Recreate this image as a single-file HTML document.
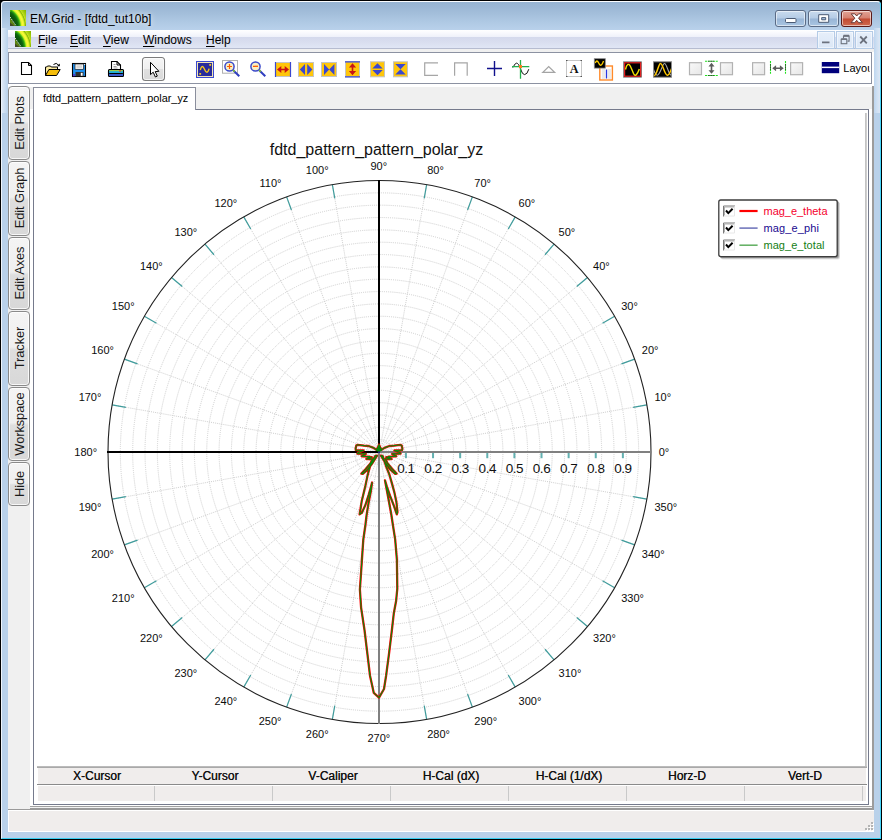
<!DOCTYPE html>
<html><head><meta charset="utf-8"><title>EM.Grid - [fdtd_tut10b]</title>
<style>
*{box-sizing:border-box;margin:0;padding:0}
html,body{width:882px;height:840px;overflow:hidden;background:#000}
body{position:relative;font-family:"Liberation Sans",sans-serif;font-size:12px;color:#000}
.abs{position:absolute}
#win{position:absolute;left:0;top:0;width:882px;height:840px;background:#000;border-radius:5px 5px 0 0;overflow:hidden}
#frame{position:absolute;left:1px;top:1px;width:880px;height:838px;border-radius:4px 4px 0 0;
 background:linear-gradient(to bottom,#96b3d2 0px,#9bb7d5 6px,#a4bfdb 13px,#afc9e4 21px,#b9d1eb 29px,#b9d1ea 60px,#b9d1ea 100%);}
#frame:before{content:"";position:absolute;left:0;top:0;right:0;bottom:0;border-radius:4px 4px 0 0;border-top:1px solid #fbfdff;border-left:1px solid #eef4fb;border-right:1px solid #45d6fb;border-bottom:1px solid #38cdf0}
#rgrad{position:absolute;left:874px;top:28px;width:6px;height:85px;background:linear-gradient(to right,#bed6ef,#cfe0f2 50%,#dde6f4)}
#lgrad{position:absolute;left:2px;top:28px;width:6px;height:85px;background:linear-gradient(to right,#dde8f5,#c6daef 60%,#b9d1ea)}
#title{position:absolute;left:30px;top:11.6px;font-size:12px;line-height:14px;white-space:nowrap;color:#000;text-shadow:0 0 5px rgba(255,255,255,.75),0 0 9px rgba(255,255,255,.5)}
.cap{position:absolute;top:10px;height:17px;border:1px solid #5a6b86;border-radius:3px;
 background:linear-gradient(to bottom,#c9dbee 0%,#b4cbe5 48%,#98b5d6 52%,#a9c5e2 100%);box-shadow:inset 0 0 0 1px rgba(255,255,255,.55)}
.cap.close{border-color:#5a1a18;background:linear-gradient(to bottom,#e2a497 0%,#d5806f 48%,#c24a32 52%,#cf6a50 100%)}
#menubar{position:absolute;left:8px;top:30px;width:866px;height:19px;background:linear-gradient(to bottom,#ffffff 0px,#f8f9fd 3px,#eef1fa 7px,#d4d9ec 7px,#d9deef 12px,#e0e6f5 18px,#b6bcd0 18px,#b6bcd0 19px)}
#menubar .mi{position:absolute;top:3px;font-size:12px;line-height:14px;white-space:nowrap}
#menubar .mi u{text-decoration:underline;text-underline-offset:1.5px}
.mdi{position:absolute;top:1px;width:18px;height:18px;border:1px solid #b4cbe6;background:linear-gradient(to bottom,#e6effa,#dbe7f6);box-shadow:inset 0 0 0 1px rgba(255,255,255,.5)}
#client{position:absolute;left:8px;top:49px;width:866px;height:783px;background:#fff}
#mgap{position:absolute;left:8px;top:49px;width:866px;height:3px;background:#f0f0f0}
#toolbar{position:absolute;left:8px;top:52px;width:864px;height:32px;background:#fff;border:1px solid #8c92a2}
#gray{position:absolute;left:8px;top:87px;width:864px;height:722px;background:#f0f0f0}
#rgray{position:absolute;left:872px;top:86px;width:2px;height:724px;background:#9c9c9c}
#bgray{position:absolute;left:30px;top:805px;width:842px;height:5px;background:linear-gradient(to bottom,#fff 0,#fff 1px,#a2a2a2 1px,#a2a2a2 2px,#f2f2f2 2px,#f2f2f2 3px,#9a9a9a 3px)}
#sbline{position:absolute;left:8px;top:809px;width:22px;height:1px;background:#9a9a9a}
#wcol{position:absolute;left:30px;top:109px;width:842px;height:697px;background:#fff}
.vtab{position:absolute;left:8px;width:22px;border:1px solid #8a8a8a;border-radius:4px;
 background:linear-gradient(to bottom,#f4f4f4 0%,#efefef 48%,#dedede 52%,#d8d8d8 100%);box-shadow:inset 0 0 0 1px rgba(255,255,255,.8)}
.vtab span{position:absolute;left:calc(50% + 0.8px);top:calc(50% - 0.5px);white-space:nowrap;letter-spacing:-0.1px;font-size:12.9px;line-height:14px;transform:translate(-50%,-50%) rotate(-90deg);color:#1a1a1a}
#view{position:absolute;left:33px;top:109px;width:836px;height:696px;background:#fff;border:1px solid #757a8c;}
#tab{position:absolute;left:33px;top:87px;width:163px;height:23px;background:#fff;border:1px solid #8a8e9c;border-bottom:none;font-size:11px;}
#tab span{position:absolute;left:9px;top:4px;white-space:nowrap;font-size:10.9px;line-height:13px}
#status{position:absolute;left:8px;top:810px;width:866px;height:22px;background:#f0edec;border:1px solid #fff;border-right:none}
svg text{font-family:"Liberation Sans",sans-serif}
.g{fill:none;stroke:#cecece;stroke-width:1;stroke-dasharray:1 1.1}
.t{stroke:#3f9c9c;stroke-width:1.2}
.dl{font-size:11px;fill:#0c0c0c}
.al{font-size:13.5px;fill:#111;letter-spacing:-0.45px}
.hdr{position:absolute;top:0;height:16px;font-size:12px;font-weight:normal;text-shadow:0.25px 0 0 #333;text-align:center;line-height:16px;color:#111}
.vs{position:absolute;top:676px;width:1px;height:15px;background:#c9c9c9}
.grip{position:absolute;width:2px;height:2px;background:#b4b4b4;box-shadow:1px 1px 0 #fff}

</style></head><body>
<div id="win">
<div id="frame"></div>
<div id="rgrad"></div><div id="lgrad"></div>
<svg class="abs" style="left:10px;top:10px" width="16" height="16" viewBox="0 0 16 16"><radialGradient id="lg1" gradientUnits="userSpaceOnUse" cx="-9.8" cy="16.9" r="36"><stop offset="0.000" stop-color="#052c05"/><stop offset="0.389" stop-color="#0a4a0a"/><stop offset="0.494" stop-color="#0f6410"/><stop offset="0.539" stop-color="#2a9a10"/><stop offset="0.564" stop-color="#62d018"/><stop offset="0.589" stop-color="#d8ee28"/><stop offset="0.628" stop-color="#fbfb3a"/><stop offset="0.661" stop-color="#e6f230"/><stop offset="0.683" stop-color="#b4d816"/><stop offset="0.703" stop-color="#86b408"/><stop offset="0.722" stop-color="#c0e020"/><stop offset="0.764" stop-color="#a8d010"/><stop offset="0.833" stop-color="#86ba00"/><stop offset="1.000" stop-color="#6aa000"/></radialGradient><rect width="16" height="16" fill="url(#lg1)"/><path d="M0,7.6 L5.6,16 H0z" fill="#5f8612"/><path d="M0,16 h4.4 l-4.4,-3.4z" fill="#3e3e2c" opacity=".85"/><path d="M0,7 L6.2,16" stroke="#fff" stroke-width="1" stroke-dasharray="1.2 1" fill="none"/><path d="M0,0 h2.2 q-1.6,1 -2.2,2.6z" fill="#4aa812"/></svg>
<svg class="abs" style="left:15px;top:31px;z-index:6" width="16" height="16" viewBox="0 0 16 16"><radialGradient id="lg2" gradientUnits="userSpaceOnUse" cx="-9.8" cy="16.9" r="36"><stop offset="0.000" stop-color="#052c05"/><stop offset="0.389" stop-color="#0a4a0a"/><stop offset="0.494" stop-color="#0f6410"/><stop offset="0.539" stop-color="#2a9a10"/><stop offset="0.564" stop-color="#62d018"/><stop offset="0.589" stop-color="#d8ee28"/><stop offset="0.628" stop-color="#fbfb3a"/><stop offset="0.661" stop-color="#e6f230"/><stop offset="0.683" stop-color="#b4d816"/><stop offset="0.703" stop-color="#86b408"/><stop offset="0.722" stop-color="#c0e020"/><stop offset="0.764" stop-color="#a8d010"/><stop offset="0.833" stop-color="#86ba00"/><stop offset="1.000" stop-color="#6aa000"/></radialGradient><rect width="16" height="16" fill="url(#lg2)"/><path d="M0,7.6 L5.6,16 H0z" fill="#5f8612"/><path d="M0,16 h4.4 l-4.4,-3.4z" fill="#3e3e2c" opacity=".85"/><path d="M0,7 L6.2,16" stroke="#fff" stroke-width="1" stroke-dasharray="1.2 1" fill="none"/><path d="M0,0 h2.2 q-1.6,1 -2.2,2.6z" fill="#4aa812"/></svg>
<div id="title">EM.Grid - [fdtd_tut10b]</div>
<div class="cap" style="left:775px;width:31px"></div>
<div class="cap" style="left:808px;width:31px"></div>
<div class="cap close" style="left:841px;width:31px"></div>
<svg class="abs" style="left:770px;top:4px;z-index:5" width="112" height="50" viewBox="770 4 112 50">
<rect x="785.5" y="18.5" width="10.5" height="4" rx="1" fill="#fff" stroke="#4a5a74" stroke-width="1"/>
<path d="M818.7,14.7 h10 v7.6 h-10z M821.7,17.6 h4 v2.2 h-4z" fill="#fff" fill-rule="evenodd" stroke="#4a5a74" stroke-width="1" stroke-linejoin="round"/>
<path d="M851.2,13.8 L854.8,13.8 L856.7,16 L858.6,13.8 L862.2,13.8 L858.6,18.2 L862.4,22.7 L858.7,22.7 L856.7,20.3 L854.7,22.7 L851,22.7 L854.8,18.2Z" fill="#fff" stroke="#6a3a36" stroke-width="1" stroke-linejoin="round"/>
<g fill="none" stroke="#6c727e" stroke-width="1.6">
<path d="M822,42.4 h7.5"/>
<path d="M860.2,36.5 l6.6,6.8 M866.8,36.5 l-6.6,6.8" stroke-width="1.8"/>
</g>
<g fill="none" stroke="#6c727e" stroke-width="1.1">
<path d="M843.5,38.5 v-2.4 h5.6 v5 h-1.6" />
<path d="M843.5,35.6 h5.6" stroke-width="1.6"/>
<rect x="841.2" y="39.3" width="5.6" height="4.4"/>
<path d="M841.2,39 h5.6" stroke-width="1.6"/>
</g>
</svg>
<div id="menubar">
 <div class="mi" style="left:30px"><u>F</u>ile</div>
 <div class="mi" style="left:62px"><u>E</u>dit</div>
 <div class="mi" style="left:95px"><u>V</u>iew</div>
 <div class="mi" style="left:135px"><u>W</u>indows</div>
 <div class="mi" style="left:198px"><u>H</u>elp</div>
 <div class="mdi" style="left:809px"></div>
 <div class="mdi" style="left:828px"></div>
 <div class="mdi" style="left:847px"></div>
</div>
<div id="client"></div><div id="mgap"></div>
<div id="gray"></div><div id="wcol"></div><div id="rgray"></div><div id="bgray"></div><div id="sbline"></div>
<div id="toolbar"></div>
<svg class="abs" style="left:0;top:50px;z-index:4" width="882" height="36" viewBox="0 50 882 36">
<!-- new -->
<path d="M21.5,62.5 h7 l3,3 v9 h-10z" fill="#fff" stroke="#000" stroke-width="1.1"/>
<path d="M28.5,62.5 v3 h3" fill="none" stroke="#000" stroke-width="1"/>
<!-- open -->
<path d="M45.5,75.5 v-8.5 h1.2 l0.8,-1 h3 l0.8,1 h6.2 v2" fill="#fbeaa0" stroke="#000" stroke-width="1"/>
<path d="M45.5,75.5 l3.4,-6 h11.3 l-3.6,6z" fill="#f5bd0a" stroke="#000" stroke-width="1" stroke-linejoin="round"/>
<path d="M53.5,64.5 q2.8,-2.6 5.3,0.8" fill="none" stroke="#000" stroke-width="1"/>
<path d="M59.8,63.5 v2.8 h-2.8z" fill="#000"/>
<!-- save -->
<rect x="72.5" y="63.5" width="13" height="13" fill="#1e8fee" stroke="#000" stroke-width="1.1"/>
<rect x="75" y="64" width="8.5" height="5.3" fill="#f4f4f4" stroke="#222" stroke-width=".7"/>
<rect x="76.5" y="65.3" width="5.5" height="2.6" fill="#d6d6d6"/>
<rect x="75.5" y="72" width="8" height="4.3" fill="#303030"/>
<rect x="80.8" y="72.8" width="1.8" height="3" fill="#fff"/>
<rect x="73" y="74" width="2" height="2.2" fill="#4a3ad0"/>
<rect x="84.2" y="64" width="1" height="1" fill="#fff"/>
<!-- print -->
<path d="M111.5,69.5 v-8 h5.5 l3.5,3.5 v4.5z" fill="#fff" stroke="#000" stroke-width="1.1"/>
<path d="M117,61.5 v3.5 h3.5" fill="none" stroke="#000" stroke-width="1"/>
<path d="M113.5,64.5 h2 M113.5,66.5 h3 M113.5,68 h4" stroke="#888" stroke-width=".8"/>
<rect x="108.5" y="69.5" width="15" height="7" rx="1" fill="#2d7be0" stroke="#000" stroke-width="1.1"/>
<rect x="109.2" y="70.2" width="13.6" height="1.2" fill="#b8e028"/>
<rect x="109.2" y="71.3" width="13.6" height="1.5" fill="#18b8d8"/>
<rect x="109.2" y="73" width="13.6" height="1" fill="#000"/>
<rect x="109.2" y="74" width="13.6" height="2" fill="#3a58c8"/>
<rect x="119" y="70.4" width="2" height="1.2" fill="#e83030"/>
<!-- pointer button -->
<linearGradient id="pb" x1="0" y1="0" x2="0" y2="1"><stop offset="0" stop-color="#f6f6f6"/><stop offset=".48" stop-color="#efefef"/><stop offset=".52" stop-color="#e0e0e0"/><stop offset="1" stop-color="#d9d9d9"/></linearGradient>
<rect x="142.5" y="57.5" width="22" height="23" rx="3" fill="url(#pb)" stroke="#7c7c7c" stroke-width="1.1"/>
<rect x="143.5" y="58.5" width="20" height="21" rx="2" fill="none" stroke="#fff" stroke-opacity=".7" stroke-width="1"/>
<path d="M150.5,62.3 V74.6 L153.2,72.2 L155.4,77 L157.3,76.1 L155.2,71.6 L158.9,71.3Z" fill="#fff" stroke="#000" stroke-width="1" stroke-linejoin="miter"/>
</svg>
<svg class="abs" style="left:0;top:50px;z-index:4" width="882" height="36" viewBox="0 50 882 36">
<!-- graph -->
<rect x="196.5" y="61.5" width="17" height="16" fill="#282c9c" stroke="#3b4bd2" stroke-width="1"/>
<rect x="197.5" y="62.5" width="15" height="14" fill="none" stroke="#f3e6b4" stroke-width="1"/>
<path d="M200.3,70 q1.6,-6.5 4.2,-0.8 q2.6,6.4 4.6,-0.6" fill="none" stroke="#f6c81a" stroke-width="1.4"/>
<rect x="209.3" y="64" width="1.8" height="1.8" fill="#f6c81a"/><rect x="199.3" y="73" width="1.8" height="1.8" fill="#f6c81a"/>
<!-- zoom in -->
<rect x="222.5" y="60.5" width="15" height="12.7" fill="#fff" stroke="#b0b0b0" stroke-width="1"/>
<path d="M233.2,70.2 L239.3,76.3" stroke="#2f3ec0" stroke-width="2"/>
<path d="M232.6,69.6 L234.6,71.6" stroke="#86c828" stroke-width="1.6"/>
<circle cx="229.5" cy="66.5" r="4.6" fill="#f9f0c4" stroke="#3b4acb" stroke-width="1.5"/>
<path d="M227,66.5 h5 M229.5,64 v5" stroke="#ff5a00" stroke-width="1.2"/>
<!-- zoom out -->
<path d="M259.2,70.2 L265.3,76.3" stroke="#2f3ec0" stroke-width="2"/>
<path d="M258.6,69.6 L260.6,71.6" stroke="#86c828" stroke-width="1.6"/>
<circle cx="255.5" cy="66.5" r="4.6" fill="#f9f0c4" stroke="#3b4acb" stroke-width="1.5"/>
<path d="M253,66.3 h5" stroke="#ff5a00" stroke-width="1.3"/>
<!-- h expand -->
<rect x="275.5" y="62.5" width="15" height="14" fill="#ffc60a" stroke="#c4c4c4" stroke-width="1"/>
<path d="M275.5,62 v15 M290.5,62 v15" stroke="#3a48d0" stroke-width="1.2"/>
<path d="M277,69.5 l4.3,-3.6 v2.8 h3.4 v-2.8 l4.3,3.6 l-4.3,3.6 v-2.8 h-3.4 v2.8z" fill="#c81414"/>
<!-- h tri out -->
<rect x="298.5" y="62.5" width="15" height="14" fill="#ffc60a" stroke="#c4c4c4" stroke-width="1"/>
<path d="M299.8,69.5 l5.2,-5.4 v10.8z M312.4,69.5 l-5.2,-5.4 v10.8z" fill="#3a48d0"/>
<!-- bowtie -->
<rect x="321.5" y="62.5" width="15" height="14" fill="#ffc60a" stroke="#c4c4c4" stroke-width="1"/>
<path d="M324,64 l5.2,5.5 l5.2,-5.5 v11 l-5.2,-5.5 l-5.2,5.5z" fill="#3a48d0"/>
<!-- v expand -->
<rect x="345.5" y="61.8" width="14" height="15" fill="#ffc60a" stroke="#c4c4c4" stroke-width="1"/>
<path d="M345,61.8 h15 M345,76.8 h15" stroke="#3a48d0" stroke-width="1.2"/>
<path d="M352.5,63.3 l3.6,4.3 h-2.8 v3.4 h2.8 l-3.6,4.3 l-3.6,-4.3 h2.8 v-3.4 h-2.8z" fill="#c81414"/>
<!-- v tri out -->
<rect x="370.5" y="61.8" width="14" height="15" fill="#ffc60a" stroke="#c4c4c4" stroke-width="1"/>
<path d="M377.5,63.3 l5.2,5.2 h-10.4z M377.5,75.3 l5.2,-5.2 h-10.4z" fill="#3a48d0"/>
<!-- hourglass -->
<rect x="393.5" y="61.8" width="14" height="15" fill="#ffc60a" stroke="#c4c4c4" stroke-width="1"/>
<path d="M395.3,64 h10.4 l-5.2,5.3 l5.2,5.3 h-10.4 l5.2,-5.3z" fill="#3a48d0"/>
<!-- brackets -->
<path d="M438,62.8 h-13.3 v12.5 h13.3" fill="none" stroke="#a6a6a6" stroke-width="1.2"/>
<path d="M454.6,75.8 v-13 h12.6 v13" fill="none" stroke="#a6a6a6" stroke-width="1.2"/>
</svg>
<svg class="abs" style="left:0;top:50px;z-index:4" width="882" height="36" viewBox="0 50 882 36">
<!-- plus -->
<path d="M487,68.5 h15 M494.5,61 v15" stroke="#10108c" stroke-width="1.4" fill="none"/>
<!-- tracker -->
<path d="M512.8,67.6 q0.8,-1.2 1.6,-2.6 q2,-3.4 4,-0.6 q1.6,2.2 2.6,5.6 q1.2,4.4 3.6,4.6 q2.6,0 4.2,-5.4" fill="none" stroke="#111" stroke-width="1"/>
<path d="M512,66.6 h17.3 M520.5,60 v18.8" stroke="#22b14c" stroke-width="1.3" fill="none"/>
<rect x="519" y="65.1" width="3" height="3" fill="#ff7a1a"/>
<!-- triangle -->
<path d="M542.8,72.4 L548.7,66.6 L554.6,72.4Z" fill="none" stroke="#a4a4a4" stroke-width="1.3"/>
<!-- A -->
<rect x="566.5" y="60.5" width="15" height="16" fill="#fff" stroke="#c6c6c6" stroke-width="1"/>
<path d="M566,60.5 h1.5 M580.5,60.5 h1.5 M566,76.5 h1.5 M580.5,76.5 h1.5" stroke="#555" stroke-width="1"/>
<text x="574.1" y="72.8" text-anchor="middle" style="font-family:'Liberation Serif',serif;font-weight:bold;font-size:12.2px" fill="#111">A</text>
<!-- copy -->
<rect x="599.8" y="66" width="12.6" height="14" fill="#fff" stroke="#ff8a2a" stroke-width="1.4"/>
<path d="M601.8,70 h3.4 M601.8,72 h3.4 M601.8,74 h3.4 M601.8,76 h3.4 M601.8,78 h3.4 M607.8,70 h3.2 M607.8,72 h3.2 M607.8,74 h3.2 M607.8,76 h3.2 M607.8,78 h3.2" stroke="#c4c4c4" stroke-width=".7"/>
<path d="M606.5,69.5 v9" stroke="#2838e0" stroke-width="1.3"/>
<rect x="594.3" y="58.7" width="11" height="9.4" fill="#000" stroke="#8a8a8a" stroke-width=".8"/>
<path d="M595.3,63 q1.5,-4 3.4,0 q1.6,3.6 3.2,1.4 q0.8,-1 1.6,-3.4" fill="none" stroke="#ffd000" stroke-width="1.3"/>
<!-- black red -->
<rect x="623.6" y="61.8" width="18" height="15.4" fill="#000" stroke="#8a8a8a" stroke-width=".8"/>
<rect x="624.6" y="62.8" width="16" height="13.4" fill="none" stroke="#e42020" stroke-width="1.2"/>
<path d="M625.5,69.5 q2,-8.5 5,-3 q1.6,3.4 3,7 q2.4,5 5.8,-4.5" fill="none" stroke="#f2e000" stroke-width="1.4"/>
<!-- black gray -->
<rect x="653.5" y="61.8" width="18" height="15.4" fill="#000" stroke="#8a8a8a" stroke-width="1"/>
<clipPath id="bg2"><rect x="654" y="62.3" width="17" height="14.4"/></clipPath>
<g clip-path="url(#bg2)"><path d="M650.2,63.6 C652.6,63.6 654.2,75.5 657.2,75.3 C660.2,75 662.5,63.5 664.5,63.5 C667,63.5 668.5,75.5 671.5,75.3" fill="none" stroke="#a8a8a8" stroke-width="1.1"/>
<path d="M654.2,75.8 C657,75 658.5,63.5 660.5,63.5 C663,63.5 664.5,75.5 667.5,75.3 C669.5,75 670.5,71 671.6,68.6" fill="none" stroke="#ffc800" stroke-width="1.5"/></g>
<!-- checkboxes -->
<linearGradient id="cbx" x1="0" y1="0" x2="1" y2="1"><stop offset="0" stop-color="#f9f9f9"/><stop offset="1" stop-color="#e6e6e6"/></linearGradient>
<rect x="689.5" y="62.7" width="12" height="12" fill="url(#cbx)" stroke="#b2b2b2" stroke-width="1.2"/>
<rect x="720.5" y="62.7" width="12" height="12" fill="url(#cbx)" stroke="#b2b2b2" stroke-width="1.2"/>
<rect x="752.6" y="62.7" width="12" height="12" fill="url(#cbx)" stroke="#b2b2b2" stroke-width="1.2"/>
<rect x="790.6" y="62.7" width="12" height="12" fill="url(#cbx)" stroke="#b2b2b2" stroke-width="1.2"/>
<!-- v arrow -->
<path d="M705,61.3 h13 M705,75.5 h13" stroke="#22e020" stroke-width="1.1" stroke-dasharray="2 0.7"/>
<path d="M708.5,61.3 h6 M708.5,75.5 h6" stroke="#111" stroke-width="1.1" stroke-dasharray="1 1"/>
<path d="M711.5,62.8 l3,3.6 h-2.2 v3.8 h2.2 l-3,3.6 l-3,-3.6 h2.2 v-3.8 h-2.2z" fill="#5c5c5c"/>
<!-- h arrow -->
<path d="M770.5,61 v13 M785.5,61 v13" stroke="#22e020" stroke-width="1.1" stroke-dasharray="2 0.7"/>
<path d="M770.5,64.5 v6 M785.5,64.5 v6" stroke="#111" stroke-width="1.1" stroke-dasharray="1 1"/>
<path d="M772.3,68.3 l3.8,-3 v2.2 h3.8 v-2.2 l3.8,3 l-3.8,3 v-2.2 h-3.8 v2.2z" fill="#5c5c5c"/>
<!-- layout -->
<rect x="821.8" y="62" width="17.4" height="11.2" fill="#00007c"/>
<rect x="821.8" y="66.6" width="17.4" height="1.5" fill="#fff"/>
<clipPath id="lc"><rect x="840" y="54" width="29.6" height="28"/></clipPath>
<text x="843.3" y="72" font-size="11px" fill="#000" clip-path="url(#lc)">Layou</text>
</svg>

 <div class="vtab" style="top:86px;height:74px"><span>Edit Plots</span></div>
 <div class="vtab" style="top:161px;height:75px"><span>Edit Graph</span></div>
 <div class="vtab" style="top:237px;height:73px"><span>Edit Axes</span></div>
 <div class="vtab" style="top:311px;height:75px"><span>Tracker</span></div>
 <div class="vtab" style="top:387px;height:74px"><span>Workspace</span></div>
 <div class="vtab" style="top:462px;height:44px"><span>Hide</span></div>
 <div id="view">
  <div class="abs" style="left:831px;top:3px;width:2px;height:653px;background:linear-gradient(to right,#bdbdbd,#d6d6d6)"></div>
  <div class="abs" style="left:3px;top:656px;width:830px;height:2px;background:linear-gradient(to bottom,#c4c4c4,#a0a0a0)"></div>
  <div class="abs" style="left:4px;top:658px;width:828px;height:16px;background:#f0edec"></div>
  <div class="abs" style="left:3px;top:674px;width:830px;height:1px;background:#8a8a8a"></div>
  <div class="abs" style="left:4px;top:676px;width:828px;height:15px;background:#f0edec"></div>
  <div class="hdr" style="left:4px;top:658px;width:118px">X-Cursor</div>
  <div class="hdr" style="left:122px;top:658px;width:118px">Y-Cursor</div>
  <div class="hdr" style="left:240px;top:658px;width:118px">V-Caliper</div>
  <div class="hdr" style="left:358px;top:658px;width:118px">H-Cal (dX)</div>
  <div class="hdr" style="left:476px;top:658px;width:118px">H-Cal (1/dX)</div>
  <div class="hdr" style="left:594px;top:658px;width:118px">Horz-D</div>
  <div class="hdr" style="left:712px;top:658px;width:118px">Vert-D</div>
  <div class="vs" style="left:120px"></div><div class="vs" style="left:238px"></div><div class="vs" style="left:356px"></div>
  <div class="vs" style="left:474px"></div><div class="vs" style="left:592px"></div><div class="vs" style="left:710px"></div><div class="vs" style="left:828px"></div>
 </div>
 <div id="tab"><span>fdtd_pattern_pattern_polar_yz</span></div>
 <div id="status"></div><div class="grip" style="left:870.5px;top:822px"></div><div class="grip" style="left:867.5px;top:825px"></div><div class="grip" style="left:870.5px;top:825px"></div><div class="grip" style="left:864.5px;top:828px"></div><div class="grip" style="left:867.5px;top:828px"></div><div class="grip" style="left:870.5px;top:828px"></div>
<svg class="abs" style="left:0;top:0" width="882" height="840" viewBox="0 0 882 840">
<text x="376.5" y="155" text-anchor="middle" font-size="16" fill="#111">fdtd_pattern_pattern_polar_yz</text>
<circle cx="379.5" cy="452.0" r="12.34" class="g"/>
<circle cx="379.5" cy="452.0" r="24.68" class="g"/>
<circle cx="379.5" cy="452.0" r="37.02" class="g"/>
<circle cx="379.5" cy="452.0" r="49.36" class="g"/>
<circle cx="379.5" cy="452.0" r="61.70" class="g"/>
<circle cx="379.5" cy="452.0" r="74.05" class="g"/>
<circle cx="379.5" cy="452.0" r="86.39" class="g"/>
<circle cx="379.5" cy="452.0" r="98.73" class="g"/>
<circle cx="379.5" cy="452.0" r="111.07" class="g"/>
<circle cx="379.5" cy="452.0" r="123.41" class="g"/>
<circle cx="379.5" cy="452.0" r="135.75" class="g"/>
<circle cx="379.5" cy="452.0" r="148.09" class="g"/>
<circle cx="379.5" cy="452.0" r="160.43" class="g"/>
<circle cx="379.5" cy="452.0" r="172.77" class="g"/>
<circle cx="379.5" cy="452.0" r="185.11" class="g"/>
<circle cx="379.5" cy="452.0" r="197.45" class="g"/>
<circle cx="379.5" cy="452.0" r="209.80" class="g"/>
<circle cx="379.5" cy="452.0" r="222.14" class="g"/>
<circle cx="379.5" cy="452.0" r="234.48" class="g"/>
<circle cx="379.5" cy="452.0" r="246.82" class="g"/>
<circle cx="379.5" cy="452.0" r="259.16" class="g"/>
<line x1="379.5" y1="452.0" x2="646.88" y2="404.85" class="g"/>
<line x1="379.5" y1="452.0" x2="634.63" y2="359.14" class="g"/>
<line x1="379.5" y1="452.0" x2="614.63" y2="316.25" class="g"/>
<line x1="379.5" y1="452.0" x2="587.48" y2="277.48" class="g"/>
<line x1="379.5" y1="452.0" x2="554.02" y2="244.02" class="g"/>
<line x1="379.5" y1="452.0" x2="515.25" y2="216.87" class="g"/>
<line x1="379.5" y1="452.0" x2="472.36" y2="196.87" class="g"/>
<line x1="379.5" y1="452.0" x2="426.65" y2="184.62" class="g"/>
<line x1="379.5" y1="452.0" x2="332.35" y2="184.62" class="g"/>
<line x1="379.5" y1="452.0" x2="286.64" y2="196.87" class="g"/>
<line x1="379.5" y1="452.0" x2="243.75" y2="216.87" class="g"/>
<line x1="379.5" y1="452.0" x2="204.98" y2="244.02" class="g"/>
<line x1="379.5" y1="452.0" x2="171.52" y2="277.48" class="g"/>
<line x1="379.5" y1="452.0" x2="144.37" y2="316.25" class="g"/>
<line x1="379.5" y1="452.0" x2="124.37" y2="359.14" class="g"/>
<line x1="379.5" y1="452.0" x2="112.12" y2="404.85" class="g"/>
<line x1="379.5" y1="452.0" x2="112.12" y2="499.15" class="g"/>
<line x1="379.5" y1="452.0" x2="124.37" y2="544.86" class="g"/>
<line x1="379.5" y1="452.0" x2="144.37" y2="587.75" class="g"/>
<line x1="379.5" y1="452.0" x2="171.52" y2="626.52" class="g"/>
<line x1="379.5" y1="452.0" x2="204.98" y2="659.98" class="g"/>
<line x1="379.5" y1="452.0" x2="243.75" y2="687.13" class="g"/>
<line x1="379.5" y1="452.0" x2="286.64" y2="707.13" class="g"/>
<line x1="379.5" y1="452.0" x2="332.35" y2="719.38" class="g"/>
<line x1="379.5" y1="452.0" x2="426.65" y2="719.38" class="g"/>
<line x1="379.5" y1="452.0" x2="472.36" y2="707.13" class="g"/>
<line x1="379.5" y1="452.0" x2="515.25" y2="687.13" class="g"/>
<line x1="379.5" y1="452.0" x2="554.02" y2="659.98" class="g"/>
<line x1="379.5" y1="452.0" x2="587.48" y2="626.52" class="g"/>
<line x1="379.5" y1="452.0" x2="614.63" y2="587.75" class="g"/>
<line x1="379.5" y1="452.0" x2="634.63" y2="544.86" class="g"/>
<line x1="379.5" y1="452.0" x2="646.88" y2="499.15" class="g"/>
<line x1="646.88" y1="404.85" x2="633.09" y2="407.29" class="t"/>
<line x1="634.63" y1="359.14" x2="621.47" y2="363.93" class="t"/>
<line x1="614.63" y1="316.25" x2="602.50" y2="323.25" class="t"/>
<line x1="587.48" y1="277.48" x2="576.76" y2="286.48" class="t"/>
<line x1="554.02" y1="244.02" x2="545.02" y2="254.74" class="t"/>
<line x1="515.25" y1="216.87" x2="508.25" y2="229.00" class="t"/>
<line x1="472.36" y1="196.87" x2="467.57" y2="210.03" class="t"/>
<line x1="426.65" y1="184.62" x2="424.21" y2="198.41" class="t"/>
<line x1="332.35" y1="184.62" x2="334.79" y2="198.41" class="t"/>
<line x1="286.64" y1="196.87" x2="291.43" y2="210.03" class="t"/>
<line x1="243.75" y1="216.87" x2="250.75" y2="229.00" class="t"/>
<line x1="204.98" y1="244.02" x2="213.98" y2="254.74" class="t"/>
<line x1="171.52" y1="277.48" x2="182.24" y2="286.48" class="t"/>
<line x1="144.37" y1="316.25" x2="156.50" y2="323.25" class="t"/>
<line x1="124.37" y1="359.14" x2="137.53" y2="363.93" class="t"/>
<line x1="112.12" y1="404.85" x2="125.91" y2="407.29" class="t"/>
<line x1="112.12" y1="499.15" x2="125.91" y2="496.71" class="t"/>
<line x1="124.37" y1="544.86" x2="137.53" y2="540.07" class="t"/>
<line x1="144.37" y1="587.75" x2="156.50" y2="580.75" class="t"/>
<line x1="171.52" y1="626.52" x2="182.24" y2="617.52" class="t"/>
<line x1="204.98" y1="659.98" x2="213.98" y2="649.26" class="t"/>
<line x1="243.75" y1="687.13" x2="250.75" y2="675.00" class="t"/>
<line x1="286.64" y1="707.13" x2="291.43" y2="693.97" class="t"/>
<line x1="332.35" y1="719.38" x2="334.79" y2="705.59" class="t"/>
<line x1="426.65" y1="719.38" x2="424.21" y2="705.59" class="t"/>
<line x1="472.36" y1="707.13" x2="467.57" y2="693.97" class="t"/>
<line x1="515.25" y1="687.13" x2="508.25" y2="675.00" class="t"/>
<line x1="554.02" y1="659.98" x2="545.02" y2="649.26" class="t"/>
<line x1="587.48" y1="626.52" x2="576.76" y2="617.52" class="t"/>
<line x1="614.63" y1="587.75" x2="602.50" y2="580.75" class="t"/>
<line x1="634.63" y1="544.86" x2="621.47" y2="540.07" class="t"/>
<line x1="646.88" y1="499.15" x2="633.09" y2="496.71" class="t"/>
<circle cx="379.5" cy="452.0" r="271.5" fill="none" stroke="#222" stroke-width="1.1"/>
<line x1="379" y1="452" x2="379" y2="724" stroke="#808080" stroke-width="2"/>
<line x1="379" y1="452" x2="651" y2="452" stroke="#808080" stroke-width="2"/>
<line x1="379" y1="180" x2="379" y2="453" stroke="#000" stroke-width="2"/>
<line x1="107" y1="452" x2="379" y2="452" stroke="#000" stroke-width="2"/>
<line x1="405.92" y1="453" x2="405.92" y2="458.2" stroke="#62b0b0" stroke-width="2"/>
<text x="397.22" y="473.1" class="al">0.1</text>
<line x1="433.04" y1="453" x2="433.04" y2="458.2" stroke="#62b0b0" stroke-width="2"/>
<text x="424.34" y="473.1" class="al">0.2</text>
<line x1="460.16" y1="453" x2="460.16" y2="458.2" stroke="#62b0b0" stroke-width="2"/>
<text x="451.46" y="473.1" class="al">0.3</text>
<line x1="487.28" y1="453" x2="487.28" y2="458.2" stroke="#62b0b0" stroke-width="2"/>
<text x="478.58" y="473.1" class="al">0.4</text>
<line x1="514.40" y1="453" x2="514.40" y2="458.2" stroke="#62b0b0" stroke-width="2"/>
<text x="505.70" y="473.1" class="al">0.5</text>
<line x1="541.52" y1="453" x2="541.52" y2="458.2" stroke="#62b0b0" stroke-width="2"/>
<text x="532.82" y="473.1" class="al">0.6</text>
<line x1="568.64" y1="453" x2="568.64" y2="458.2" stroke="#62b0b0" stroke-width="2"/>
<text x="559.94" y="473.1" class="al">0.7</text>
<line x1="595.76" y1="453" x2="595.76" y2="458.2" stroke="#62b0b0" stroke-width="2"/>
<text x="587.06" y="473.1" class="al">0.8</text>
<line x1="622.88" y1="453" x2="622.88" y2="458.2" stroke="#62b0b0" stroke-width="2"/>
<text x="614.18" y="473.1" class="al">0.9</text>
<text x="658.7" y="456.1" text-anchor="start" class="dl">0°</text>
<text x="654.4" y="401.4" text-anchor="start" class="dl">10°</text>
<text x="641.8" y="354.3" text-anchor="start" class="dl">20°</text>
<text x="621.2" y="310.0" text-anchor="start" class="dl">30°</text>
<text x="593.1" y="270.0" text-anchor="start" class="dl">40°</text>
<text x="558.6" y="235.5" text-anchor="start" class="dl">50°</text>
<text x="518.6" y="207.4" text-anchor="start" class="dl">60°</text>
<text x="474.3" y="186.8" text-anchor="start" class="dl">70°</text>
<text x="427.2" y="174.2" text-anchor="start" class="dl">80°</text>
<text x="378.8" y="169.9" text-anchor="middle" class="dl">90°</text>
<text x="328.6" y="174.2" text-anchor="end" class="dl">100°</text>
<text x="281.5" y="186.8" text-anchor="end" class="dl">110°</text>
<text x="237.2" y="207.4" text-anchor="end" class="dl">120°</text>
<text x="197.2" y="235.5" text-anchor="end" class="dl">130°</text>
<text x="162.7" y="270.0" text-anchor="end" class="dl">140°</text>
<text x="134.6" y="310.0" text-anchor="end" class="dl">150°</text>
<text x="114.0" y="354.3" text-anchor="end" class="dl">160°</text>
<text x="101.4" y="401.4" text-anchor="end" class="dl">170°</text>
<text x="97.1" y="456.1" text-anchor="end" class="dl">180°</text>
<text x="101.4" y="510.8" text-anchor="end" class="dl">190°</text>
<text x="114.0" y="557.9" text-anchor="end" class="dl">200°</text>
<text x="134.6" y="602.2" text-anchor="end" class="dl">210°</text>
<text x="162.7" y="642.2" text-anchor="end" class="dl">220°</text>
<text x="197.2" y="676.7" text-anchor="end" class="dl">230°</text>
<text x="237.2" y="704.8" text-anchor="end" class="dl">240°</text>
<text x="281.5" y="725.4" text-anchor="end" class="dl">250°</text>
<text x="328.6" y="738.0" text-anchor="end" class="dl">260°</text>
<text x="378.8" y="742.3" text-anchor="middle" class="dl">270°</text>
<text x="427.2" y="738.0" text-anchor="start" class="dl">280°</text>
<text x="474.3" y="725.4" text-anchor="start" class="dl">290°</text>
<text x="518.6" y="704.8" text-anchor="start" class="dl">300°</text>
<text x="558.6" y="676.7" text-anchor="start" class="dl">310°</text>
<text x="593.1" y="642.2" text-anchor="start" class="dl">320°</text>
<text x="621.2" y="602.2" text-anchor="start" class="dl">330°</text>
<text x="641.8" y="557.9" text-anchor="start" class="dl">340°</text>
<text x="654.4" y="510.8" text-anchor="start" class="dl">350°</text>
<path d="M376.5,449.8 L372.9,447.6 L368.6,446.0 L364.0,445.6 L357.7,444.8 L356.3,445.5 L355.6,448.7 L355.9,450.1 L363.6,450.5 L358.3,452.4 L357.4,453.7 L365.8,453.9 L361.6,456.3 L369.5,456.6 L368.0,457.4 L371.8,457.2 L366.3,459.0 L372.6,459.0 L370.4,463.4 L365.7,469.1 L361.4,473.6 L362.8,473.9 L367.6,469.6 L371.9,463.9 L377.1,455.6 L375.4,455.8 L372.2,461.0 L370.0,466.4 L367.5,475.7 L365.4,485.7 L363.2,495.0 L361.8,500.7 L360.7,507.9 L359.6,514.3 L361.8,512.9 L365.4,505.0 L368.6,495.0 L370.7,487.9 L372.1,482.5 L370.7,492.1 L368.7,502.1 L366.6,515.0 L365.4,525.0 L363.3,539.6 L361.1,572.0 L359.9,589.5 L361.1,607.6 L364.5,630.0 L367.4,653.8 L370.0,675.7 L373.8,692.9 L379.0,697.6 L384.0,689.0 L386.1,675.7 L389.0,653.8 L391.9,630.0 L393.8,613.3 L396.1,601.0 L397.3,588.6 L396.9,560.0 L395.2,539.6 L392.9,525.0 L391.4,515.0 L389.6,505.0 L387.9,495.7 L386.1,486.4 L385.0,480.4 L386.8,486.4 L390.0,495.7 L393.6,505.0 L396.8,514.3 L397.5,512.1 L396.4,502.1 L394.3,492.1 L391.8,482.9 L389.3,474.3 L386.4,467.1 L384.4,461.0 L382.6,455.8 L380.9,455.6 L386.1,463.9 L390.4,469.6 L395.2,473.9 L396.6,473.6 L392.3,469.1 L387.6,463.4 L385.4,459.0 L391.7,459.0 L386.2,457.2 L390.0,457.4 L388.5,456.6 L396.4,456.3 L392.2,453.9 L400.6,453.7 L399.7,452.4 L394.4,450.5 L402.1,450.1 L402.4,448.7 L401.7,445.5 L400.3,444.8 L394.0,445.6 L389.4,446.0 L385.1,447.6 L381.5,449.8 L379.9,446.9 L379.0,444.6 L378.2,446.9Z" fill="none" stroke="#ff0000" stroke-width="2.3" stroke-linejoin="round"/>
<path d="M376.5,449.8 L372.9,447.6 L368.6,446.0 L364.0,445.6 L357.7,444.8 L356.3,445.5 L355.6,448.7 L355.9,450.1 L363.6,450.5 L358.3,452.4 L357.4,453.7 L365.8,453.9 L361.6,456.3 L369.5,456.6 L368.0,457.4 L371.8,457.2 L366.3,459.0 L372.6,459.0 L370.4,463.4 L365.7,469.1 L361.4,473.6 L362.8,473.9 L367.6,469.6 L371.9,463.9 L377.1,455.6 L375.4,455.8 L372.2,461.0 L370.0,466.4 L367.5,475.7 L365.4,485.7 L363.2,495.0 L361.8,500.7 L360.7,507.9 L359.6,514.3 L361.8,512.9 L365.4,505.0 L368.6,495.0 L370.7,487.9 L372.1,482.5 L370.7,492.1 L368.7,502.1 L366.6,515.0 L365.4,525.0 L363.3,539.6 L361.1,572.0 L359.9,589.5 L361.1,607.6 L364.5,630.0 L367.4,653.8 L370.0,675.7 L373.8,692.9 L379.0,697.6 L384.0,689.0 L386.1,675.7 L389.0,653.8 L391.9,630.0 L393.8,613.3 L396.1,601.0 L397.3,588.6 L396.9,560.0 L395.2,539.6 L392.9,525.0 L391.4,515.0 L389.6,505.0 L387.9,495.7 L386.1,486.4 L385.0,480.4 L386.8,486.4 L390.0,495.7 L393.6,505.0 L396.8,514.3 L397.5,512.1 L396.4,502.1 L394.3,492.1 L391.8,482.9 L389.3,474.3 L386.4,467.1 L384.4,461.0 L382.6,455.8 L380.9,455.6 L386.1,463.9 L390.4,469.6 L395.2,473.9 L396.6,473.6 L392.3,469.1 L387.6,463.4 L385.4,459.0 L391.7,459.0 L386.2,457.2 L390.0,457.4 L388.5,456.6 L396.4,456.3 L392.2,453.9 L400.6,453.7 L399.7,452.4 L394.4,450.5 L402.1,450.1 L402.4,448.7 L401.7,445.5 L400.3,444.8 L394.0,445.6 L389.4,446.0 L385.1,447.6 L381.5,449.8 L379.9,446.9 L379.0,444.6 L378.2,446.9Z" fill="none" stroke="#0a860a" stroke-width="1.15" stroke-linejoin="round"/>
<path d="M379,444.8 L380.3,448 L382.5,450.6 L379,452 L375.5,450.6 L377.7,448Z" fill="#0a860a"/>
<rect x="378" y="451.6" width="2" height="1.4" fill="#202090"/>
<g id="legend">
<rect x="721" y="202" width="119" height="57.5" rx="2" fill="#000" opacity="0.10"/>
<rect x="720.3" y="201.3" width="119" height="57.5" rx="2" fill="#000" opacity="0.16"/>
<rect x="719.6" y="200.6" width="119" height="57.5" rx="2" fill="#000" opacity="0.22"/>
<rect x="718.8" y="200" width="118.4" height="56.6" rx="2" fill="#fff" stroke="#3c3c3c" stroke-width="1.3"/>
<g transform="translate(723,205.5)"><rect x="0" y="0" width="12" height="11" fill="#fff"/><path d="M0.5,11 V0.5 H12" fill="none" stroke="#7a7a7a" stroke-width="1"/><path d="M1.5,10 V1.5 H11" fill="none" stroke="#b0b0b0" stroke-width="1"/><path d="M11.5,1 V10.5 H1" fill="none" stroke="#e8e8e8" stroke-width="1"/><path d="M3,5 L5.3,7.6 L9.6,3.2" fill="none" stroke="#000" stroke-width="2"/></g>
<g transform="translate(723,222.5)"><rect x="0" y="0" width="12" height="11" fill="#fff"/><path d="M0.5,11 V0.5 H12" fill="none" stroke="#7a7a7a" stroke-width="1"/><path d="M1.5,10 V1.5 H11" fill="none" stroke="#b0b0b0" stroke-width="1"/><path d="M11.5,1 V10.5 H1" fill="none" stroke="#e8e8e8" stroke-width="1"/><path d="M3,5 L5.3,7.6 L9.6,3.2" fill="none" stroke="#000" stroke-width="2"/></g>
<g transform="translate(723,239.5)"><rect x="0" y="0" width="12" height="11" fill="#fff"/><path d="M0.5,11 V0.5 H12" fill="none" stroke="#7a7a7a" stroke-width="1"/><path d="M1.5,10 V1.5 H11" fill="none" stroke="#b0b0b0" stroke-width="1"/><path d="M11.5,1 V10.5 H1" fill="none" stroke="#e8e8e8" stroke-width="1"/><path d="M3,5 L5.3,7.6 L9.6,3.2" fill="none" stroke="#000" stroke-width="2"/></g>
<line x1="739.4" y1="211" x2="757.6" y2="211" stroke="#f00" stroke-width="2.2"/>
<line x1="739.4" y1="228.1" x2="757.6" y2="228.1" stroke="#6a6fb8" stroke-width="1.5"/>
<line x1="739.4" y1="245.2" x2="757.6" y2="245.2" stroke="#5fae5f" stroke-width="1.5"/>
<text x="763.5" y="214.6" font-size="11px" fill="#f5002d" textLength="64" lengthAdjust="spacing">mag_e_theta</text>
<text x="763.5" y="231.5" font-size="11px" fill="#1a0a90" textLength="55.5" lengthAdjust="spacing">mag_e_phi</text>
<text x="763.5" y="248.5" font-size="11px" fill="#158015" textLength="61" lengthAdjust="spacing">mag_e_total</text>
</g>
</svg>
</div>

</body></html>
